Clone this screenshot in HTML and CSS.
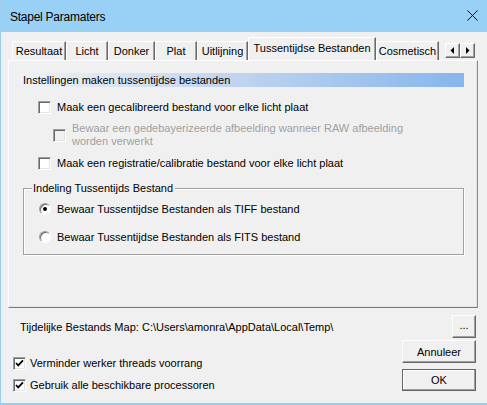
FILE: index.html
```html
<!DOCTYPE html>
<html>
<head>
<meta charset="utf-8">
<link rel="stylesheet" href="styles.css">
</head>
<body>
<div class="window">
  <div class="titlebar">
    <span class="title">Stapel Paramaters</span>
    <svg class="close" width="11" height="11" viewBox="0 0 11 11"><path d="M0.5 0.5 L10.5 10.5 M10.5 0.5 L0.5 10.5" stroke="#000" stroke-width="1" fill="none"/></svg>
  </div>
  <div class="client">
    <div class="tabs">
      <div class="tab w-res">Resultaat</div>
      <div class="tab w-lic">Licht</div>
      <div class="tab w-don">Donker</div>
      <div class="tab w-pla">Plat</div>
      <div class="tab w-uit">Uitlijning</div>
      <div class="tab active w-tus">Tussentijdse Bestanden</div>
      <div class="tab w-cos">Cosmetisch</div>
      <div class="tab-scroll">
        <span class="sbtn"><svg width="5" height="7" viewBox="0 0 5 7"><path d="M4 0 L4 7 L0.5 3.5 Z" fill="#000"/></svg></span>
        <span class="sbtn"><svg width="5" height="7" viewBox="0 0 5 7"><path d="M1 0 L1 7 L4.5 3.5 Z" fill="#000"/></svg></span>
      </div>
    </div>
    <div class="panel">
      <div class="section-header">Instellingen maken tussentijdse bestanden</div>
      <div class="row row-main first">
        <span class="cb"></span>
        <span>Maak een gecalibreerd bestand voor elke licht plaat</span>
      </div>
      <div class="row row-sub">
        <span class="cb disabled"></span>
        <span class="disabled-text">Bewaar een gedebayerizeerde afbeelding wanneer RAW afbeelding<br>worden verwerkt</span>
      </div>
      <div class="row row-main">
        <span class="cb"></span>
        <span>Maak een registratie/calibratie bestand voor elke licht plaat</span>
      </div>
      <div class="group">
        <span class="group-title">Indeling Tussentijds Bestand</span>
        <div class="row radio-row first-radio">
          <span class="rb checked"></span>
          <span>Bewaar Tussentijdse Bestanden als TIFF bestand</span>
        </div>
        <div class="row radio-row second-radio">
          <span class="rb"></span>
          <span>Bewaar Tussentijdse Bestanden als FITS bestand</span>
        </div>
      </div>
    </div>
    <div class="maprow">
      <span class="map-label">Tijdelijke Bestands Map:</span>
      <span class="map-path">C:\Users\amonra\AppData\Local\Temp\</span>
      <span class="btn dots">...</span>
    </div>
    <div class="lower">
      <div class="checks">
        <div class="row small-row">
          <span class="cb"><svg width="11" height="11" viewBox="0 0 11 11"><path d="M2 5 L4.2 7.4 L9 2.4" stroke="#000" stroke-width="1.8" fill="none"/></svg></span>
          <span>Verminder werker threads voorrang</span>
        </div>
        <div class="row small-row">
          <span class="cb"><svg width="11" height="11" viewBox="0 0 11 11"><path d="M2 5 L4.2 7.4 L9 2.4" stroke="#000" stroke-width="1.8" fill="none"/></svg></span>
          <span>Gebruik alle beschikbare processoren</span>
        </div>
      </div>
      <div class="buttons">
        <span class="btn cmd">Annuleer</span>
        <span class="btn cmd default">OK</span>
      </div>
    </div>
  </div>
</div>
</body>
</html>
```

FILE: styles.css
```css
* { box-sizing: border-box; }
html, body { margin: 0; padding: 0; }
body {
  width: 487px;
  height: 405px;
  overflow: hidden;
  font-family: "Liberation Sans", Arial, sans-serif;
  font-size: 11px;
  color: #000;
  background: #f0f0f0;
}
.window {
  width: 487px;
  height: 405px;
  background: #f0f0f0;
  border-left: 1px solid #9bcdee;
  border-bottom: 2px solid #8fd0f5;
  display: flex;
  flex-direction: column;
}
.titlebar {
  height: 32px;
  flex: none;
  background: #99d1f6;
  display: flex;
  align-items: center;
  padding-left: 9px;
  padding-right: 9px;
}
.title {
  font-size: 12px;
  letter-spacing: -0.25px;
  padding-top: 1px;
}
.close {
  margin-left: auto;
  margin-top: -1px;
}
.client {
  flex: 1;
  padding: 0 9px 0 7px;
  display: flex;
  flex-direction: column;
}
.tabs {
  margin-top: 5px;
  height: 23px;
  display: flex;
  align-items: flex-end;
  padding-left: 4px;
}
.tab {
  height: 19px;
  line-height: 18px;
  text-align: center;
  border-top: 1px solid #fff;
  border-left: 1px solid #fff;
  border-right: 1px solid #696969;
  box-shadow: inset -1px 0 0 #a0a0a0;
  white-space: nowrap;
}
.tab.active {
  height: 23px;
  line-height: 21px;
  padding-bottom: 2px;
}
.w-res { width: 54px; }
.w-lic { width: 42px; }
.w-don { width: 47px; }
.w-pla { width: 42px; }
.w-uit { width: 51px; }
.w-tus { width: 128px; }
.w-cos { width: 63px; }
.tab-scroll {
  margin-left: 6px;
  margin-bottom: 2px;
  display: flex;
}
.sbtn {
  width: 15px;
  height: 15px;
  display: flex;
  align-items: center;
  justify-content: center;
  background: #f0f0f0;
  border: 1px solid;
  border-color: #fff #696969 #696969 #fff;
  box-shadow: inset -1px -1px 0 #a0a0a0;
}
.panel {
  height: 248px;
  flex: none;
  border: 1px solid;
  border-color: #fff #8c8c8c #7a7a7a #fff;
  box-shadow: inset -1px -1px 0 #e3e3e3;
  padding: 12px 0 0 11px;
}
.section-header {
  width: 444px;
  height: 14px;
  line-height: 14px;
  padding-left: 3px;
  background: linear-gradient(to right, #eef1f6 0%, #cfdcef 35%, #86b6ec 100%);
}
.row {
  display: flex;
  align-items: center;
  height: 14px;
  white-space: nowrap;
}
.row-main {
  margin-top: 8px;
  padding-left: 18px;
  gap: 6px;
}
.row-main.first { margin-top: 13px; }
.row-sub {
  margin-top: 8px;
  height: 26px;
  padding-left: 33px;
  gap: 6px;
}
.disabled-text {
  color: #a0a0a0;
  line-height: 13px;
}
.cb {
  width: 13px;
  height: 13px;
  flex: none;
  background: #fff;
  border: 1px solid;
  border-color: #a0a0a0 #fff #fff #a0a0a0;
  box-shadow: inset 1px 1px 0 #696969, inset -1px -1px 0 #e3e3e3;
  display: flex;
  align-items: center;
  justify-content: center;
}
.cb.disabled { background: #f0f0f0; }
.group {
  margin: 18px 0 0 3px;
  padding: 0 0 10px 7px;
  width: 441px;
  border: 1px solid #a0a0a0;
  box-shadow: inset 1px 1px 0 #fff, 1px 1px 0 #fff;
  display: flex;
  flex-direction: column;
  align-items: flex-start;
}
.group-title {
  margin: -7px 0 0 1px;
  padding: 0 2px 0 1px;
  line-height: 13px;
  background: #f0f0f0;
}
.radio-row {
  padding-left: 8px;
  gap: 6px;
}
.first-radio { margin-top: 7px; }
.second-radio { margin-top: 14px; }
.rb {
  width: 12px;
  height: 12px;
  flex: none;
  border-radius: 50%;
  background: #fff;
  border: 1px solid;
  border-color: #a0a0a0 #fff #fff #a0a0a0;
  box-shadow: inset 1px 1px 0 #696969;
  display: flex;
  align-items: center;
  justify-content: center;
}
.rb.checked::after {
  content: "";
  width: 4px;
  height: 4px;
  border-radius: 50%;
  background: #000;
}
.maprow {
  margin-top: 7px;
  height: 23px;
  display: flex;
  align-items: center;
  padding-left: 12px;
  padding-right: 2px;
}
.map-label { width: 122px; }
.map-path { flex: 1; }
.btn {
  display: flex;
  align-items: center;
  justify-content: center;
  background: #f0f0f0;
  border: 1px solid;
  border-color: #fff #696969 #696969 #fff;
  box-shadow: inset -1px -1px 0 #a0a0a0;
}
.dots {
  width: 24px;
  height: 23px;
  padding-bottom: 3px;
}
.lower {
  margin-top: 2px;
  display: flex;
  justify-content: space-between;
  padding-right: 2px;
}
.checks {
  padding-top: 16px;
  padding-left: 5px;
  display: flex;
  flex-direction: column;
  gap: 8px;
}
.small-row { gap: 4px; }
.buttons {
  display: flex;
  flex-direction: column;
  gap: 6px;
}
.cmd {
  width: 74px;
  height: 23px;
}
.cmd.default {
  height: 22px;
  border-color: #646464;
  box-shadow: inset -1px -1px 0 #a0a0a0, inset 1px 1px 0 #fff;
}
```
